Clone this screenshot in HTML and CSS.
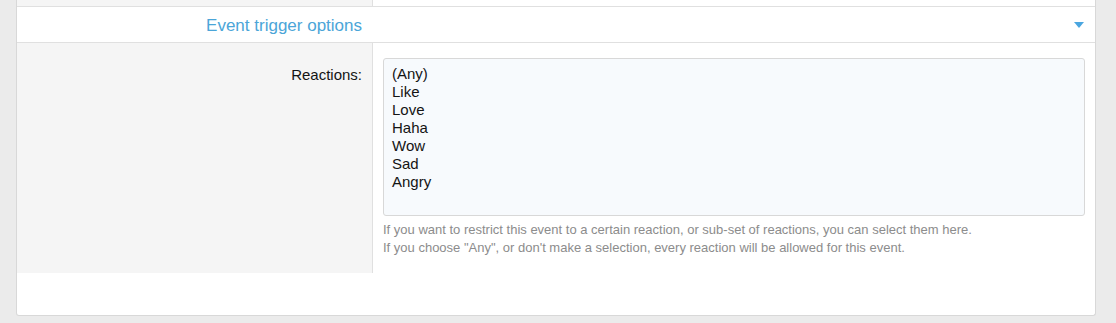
FILE: index.html
```html
<!DOCTYPE html>
<html>
<head>
<meta charset="utf-8">
<link rel="stylesheet" href="styles.css">
</head>
<body>
<div class="block">
  <div class="row row-prev">
    <div class="label-col"></div>
    <div></div>
  </div>
  <div class="row-header">
    <div class="header-title">Event trigger options</div>
    <svg class="caret" width="10" height="6" viewBox="0 0 10 6"><path d="M0 0 H10 L5 6 Z" fill="#4aa6e0"/></svg>
  </div>
  <div class="row row-form">
    <div class="label-col"><span class="label">Reactions:</span></div>
    <div class="field-col">
      <div class="select">
        <div>(Any)</div>
        <div>Like</div>
        <div>Love</div>
        <div>Haha</div>
        <div>Wow</div>
        <div>Sad</div>
        <div>Angry</div>
      </div>
      <div class="explain">
        <div>If you want to restrict this event to a certain reaction, or sub-set of reactions, you can select them here.</div>
        <div>If you choose "Any", or don't make a selection, every reaction will be allowed for this event.</div>
      </div>
    </div>
  </div>
  <div class="footer-space"></div>
</div>
</body>
</html>
```
FILE: styles.css
```css
html, body {
  margin: 0;
  padding: 0;
  background: #ebebeb;
  font-family: "Liberation Sans", Arial, sans-serif;
}
.block {
  margin-left: 16px;
  width: 1078px;
  background: #fff;
  border: 1px solid #d8d8d8;
  border-top: none;
  border-radius: 0 0 3px 3px;
}
.row {
  display: grid;
  grid-template-columns: 356px 1fr;
  border-bottom: 1px solid #e0e0e0;
}
.row-prev {
  height: 6px;
}
.label-col {
  background: #f5f5f5;
  border-right: 1px solid #e0e0e0;
  text-align: right;
}
.row-header {
  display: grid;
  grid-template-columns: 345px 1fr;
  height: 35px;
  align-items: center;
  border-bottom: 1px solid #e0e0e0;
}
.header-title {
  text-align: right;
  font-size: 17px;
  color: #4ba5d8;
  line-height: 20px;
  margin-top: 2px;
}
.caret {
  justify-self: end;
  margin-right: 11px;
  margin-top: 1px;
}
.row-form {
  border-bottom: none;
  min-height: 230px;
}
.row-form .label-col {
  padding: 22px 10px 0 0;
}
.label {
  font-size: 15px;
  color: #141414;
  line-height: 20px;
}
.field-col {
  padding: 15px 10px 15px 10px;
}
.select {
  height: 145px;
  border: 1px solid #d8d8d8;
  border-radius: 3px;
  background: #f7fafd;
  padding: 6px 8px 5px 8px;
  font-size: 15px;
  line-height: 18px;
  color: #141414;
}
.explain {
  margin-top: 5px;
  font-size: 13px;
  line-height: 18px;
  color: #8c8c8c;
}
.footer-space {
  height: 42px;
}
```
